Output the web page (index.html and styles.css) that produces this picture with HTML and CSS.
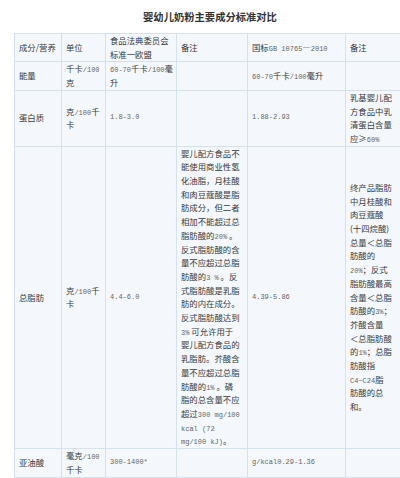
FILE: index.html
```html
<!DOCTYPE html>
<html lang="zh">
<head>
<meta charset="utf-8">
<title>婴幼儿奶粉主要成分标准对比</title>
<link rel="stylesheet" href="styles.css">
</head>
<body>
<div class="page">
  <h1 class="title">婴幼儿奶粉主要成分标准对比</h1>
  <table class="cmp">
    <colgroup>
      <col class="c1"><col class="c2"><col class="c3"><col class="c4"><col class="c5"><col class="c6">
    </colgroup>
    <tr class="r-head">
      <td>成分/营养</td>
      <td>单位</td>
      <td>食品法典委员会标准一欧盟</td>
      <td>备注</td>
      <td>国标<span class="n">GB 10765</span>—<span class="n">2010</span></td>
      <td class="last">备注</td>
    </tr>
    <tr class="r-energy">
      <td>能量</td>
      <td>千卡<span class="n">/100</span>克</td>
      <td><span class="n">60-70</span>千卡<span class="n">/100</span>毫升</td>
      <td></td>
      <td><span class="n">60-70</span>千卡<span class="n">/100</span>毫升</td>
      <td class="last"></td>
    </tr>
    <tr class="r-protein">
      <td>蛋白质</td>
      <td>克<span class="n">/100</span>千卡</td>
      <td class="n">1.8-3.0</td>
      <td></td>
      <td class="n">1.88-2.93</td>
      <td class="last">乳基婴儿配方食品中乳清蛋白含量应≥<span class="n">60%</span></td>
    </tr>
    <tr class="r-fat">
      <td>总脂肪</td>
      <td>克<span class="n">/100</span>千卡</td>
      <td class="n">4.4-6.0</td>
      <td class="note">婴儿配方食品不<br>能使用商业性氢<br>化油脂，月桂酸<br>和肉豆蔻酸是脂<br>肪成分，但二者<br>相加不能超过总<br>脂肪酸的<span class="n">20%</span> 。<br>反式脂肪酸的含<br>量不应超过总脂<br>肪酸的<span class="n">3 %</span> 。反<br>式脂肪酸是乳脂<br>肪的内在成分。<br>反式脂肪酸达到<br><span class="n">3%</span> 可允许用于<br>婴儿配方食品的<br>乳脂肪。芥酸含<br>量不应超过总脂<br>肪酸的<span class="n">1%</span> 。磷<br>脂的总含量不应<br>超过<span class="n">300 mg/100</span><br><span class="n">kcal (72</span><br><span class="n">mg/100 kJ)</span>。</td>
      <td class="n">4.39-5.86</td>
      <td class="last note">终产品脂肪<br>中月桂酸和<br>肉豆蔻酸<br>(十四烷酸)<br>总量＜总脂<br>肪酸的<br><span class="n">20%</span>；反式<br>脂肪酸最高<br>含量＜总脂<br>肪酸的<span class="n">3%</span>；<br>芥酸含量<br>＜总脂肪酸<br>的<span class="n">1%</span>；总脂<br>肪酸指<br><span class="n">C4~C24</span>脂<br>肪酸的总<br>和。</td>
    </tr>
    <tr class="r-la">
      <td>亚油酸</td>
      <td>毫克<span class="n">/100</span>千卡</td>
      <td class="n">300-1400*</td>
      <td></td>
      <td class="n">g/kcal0.29-1.36</td>
      <td class="last"></td>
    </tr>
  </table>
</div>
</body>
</html>
```
FILE: styles.css
```css
html, body {
  margin: 0;
  padding: 0;
  background: #ffffff;
  overflow: hidden;
}

.page {
  margin-left: 14px;
  width: 392px;
}

.title {
  margin: 0;
  height: 33px;
  line-height: 33px;
  text-align: center;
  font-family: "Noto Sans CJK SC", sans-serif;
  font-size: 10.3px;
  font-weight: bold;
  color: #333333;
}

.cmp {
  border-collapse: collapse;
  table-layout: fixed;
  width: 392px;
  font-family: "Noto Sans CJK SC", sans-serif;
  font-size: 8.4px;
  line-height: 13.7px;
  color: #3a3a3a;
}

.c1 { width: 47px; }
.c2 { width: 44px; }
.c3 { width: 71px; }
.c4 { width: 71px; }
.c5 { width: 98px; }
.c6 { width: 61px; }

.cmp td {
  border: 1px solid #d5e2ee;
  background: #f4f8fc;
  padding: 0 3px 0 4px;
  vertical-align: middle;
  text-align: left;
}

.cmp td.last {
  padding-right: 6px;
}

.cmp td.note {
  white-space: nowrap;
}

.n {
  font-family: "Liberation Mono", monospace;
  font-size: 7px;
  color: #666666;
}

span.n {
  line-height: 1;
}
```
